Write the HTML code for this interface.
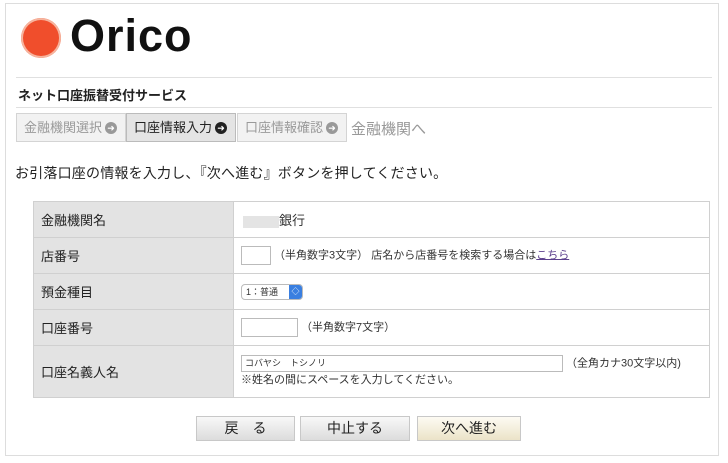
<!DOCTYPE html>
<html><head><meta charset="utf-8"><style>
*{margin:0;padding:0;box-sizing:border-box}
body{width:728px;height:463px;background:#fff;font-family:"Liberation Sans","Noto Sans CJK JP",sans-serif;color:#222;position:relative;overflow:hidden}
.a{position:absolute;white-space:nowrap}
.frame{left:5px;top:3px;width:714px;height:453px;border:1px solid #ddd}
.tab{top:113px;height:29px;background:#f2f2f2;border:1px solid #d4d4d4;font-size:13px;color:#9a9a9a;padding:0 0 0 7px;line-height:27px}
.ar{display:inline-block;width:12px;height:12px;border-radius:50%;background:#999;color:#fff;font-size:9px;line-height:12px;text-align:center;vertical-align:middle;margin-left:3px;margin-top:-2px}
table{position:absolute;left:33px;top:201px;width:677px;border-collapse:collapse;font-size:13px}
td{border:1px solid #d0d0d0;height:36px;padding:0 0 0 7px}
td.l{background:#e3e3e3;width:200px;font-size:13px;color:#222}
td.v{font-size:11px;color:#333}
.in{display:inline-block;border:1px solid #bbb;height:19px;vertical-align:middle;background:#fff}
.btn{top:416px;height:25px;border:1px solid #c8c8c8;background:linear-gradient(#f8f8f8,#dcdcdc);font-size:14px;text-align:center;line-height:23px;color:#222}
</style></head><body>
<div class="a frame"></div>
<div class="a" style="left:21px;top:18px;width:40px;height:40px;border-radius:50%;background:#f04e2c;box-shadow:0 0 0 2px #f6b49e inset"></div>
<div class="a" style="left:70px;top:10px;font-size:45px;font-weight:bold;color:#111;letter-spacing:1px">Orico</div>
<div class="a" style="left:16px;top:77px;width:696px;border-top:1px solid #e0e0e0"></div>
<div class="a" style="left:18px;top:85px;font-size:13px;font-weight:bold;color:#222">ネット口座振替受付サービス</div>
<div class="a" style="left:16px;top:107px;width:696px;border-top:1px solid #e0e0e0"></div>
<div class="a tab" style="left:16px;width:110px">金融機関選択<span class="ar">➜</span></div>
<div class="a tab" style="left:126px;width:110px;background:#e4e4e4;color:#222;border-color:#bbb">口座情報入力<span class="ar" style="background:#222">➜</span></div>
<div class="a tab" style="left:237px;width:110px">口座情報確認<span class="ar">➜</span></div>
<div class="a" style="left:351px;top:118px;font-size:15px;color:#999">金融機関へ</div>
<div class="a" style="left:15px;top:163px;font-size:14px;color:#222;letter-spacing:0.2px">お引落口座の情報を入力し、『次へ進む』ボタンを押してください。</div>
<table>
<tr><td class="l">金融機関名</td><td class="v" style="font-size:13px"><span style="display:inline-block;width:36px;height:12px;background:#e4e4e4;vertical-align:middle;margin-left:2px"></span>銀行</td></tr>
<tr><td class="l">店番号</td><td class="v"><span class="in" style="width:30px"></span>&nbsp;（半角数字3文字） 店名から店番号を検索する場合は<span style="color:#5b3f8c;text-decoration:underline">こちら</span></td></tr>
<tr><td class="l">預金種目</td><td class="v"><span style="display:inline-block;border:1px solid #bbb;border-radius:4px;height:16px;width:62px;font-size:9px;line-height:14px;padding-left:4px;position:relative;vertical-align:middle">1：普通<span style="position:absolute;right:0;top:0;width:13px;height:14px;background:#3a7fe0;border-radius:0 3px 3px 0;color:#fff;font-size:8px;text-align:center">◇</span></span></td></tr>
<tr><td class="l">口座番号</td><td class="v"><span class="in" style="width:57px"></span>&nbsp;（半角数字7文字）</td></tr>
<tr><td class="l" style="height:52px">口座名義人名</td><td class="v" style="line-height:16px"><span class="in" style="width:322px;height:17px;font-size:9px;line-height:15px;padding-left:3px">コバヤシ　トシノリ</span>&nbsp;（全角カナ30文字以内)<br>※姓名の間にスペースを入力してください。</td></tr>
</table>
<div class="a btn" style="left:196px;width:99px">戻　る</div>
<div class="a btn" style="left:300px;width:110px">中止する</div>
<div class="a btn" style="left:417px;width:104px;background:linear-gradient(#fdfbf3,#ebe3c8)">次へ進む</div>
</body></html>
